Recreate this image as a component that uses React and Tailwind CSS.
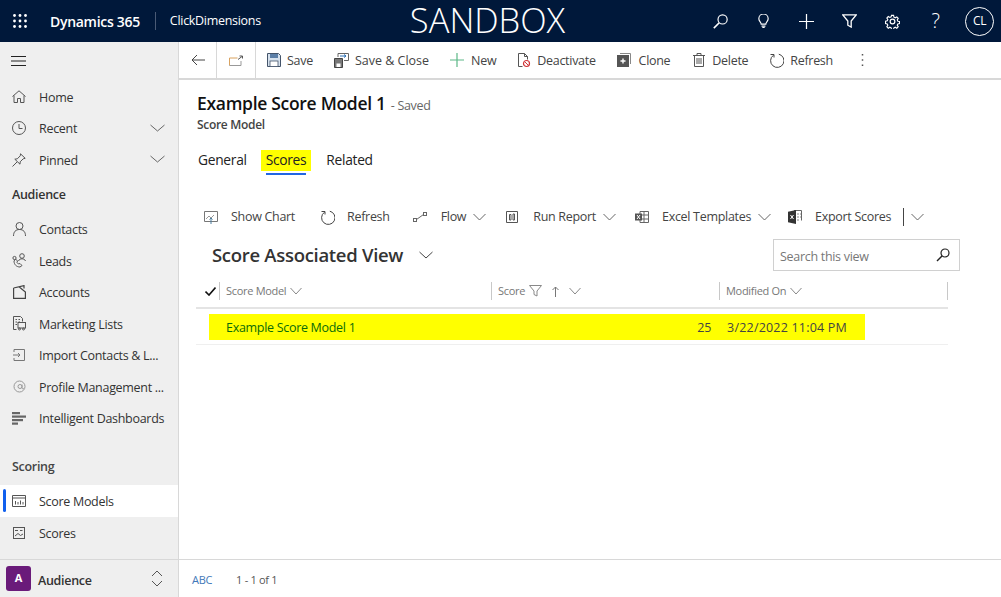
import React from "react";

const I = ({ w = 16, h = 16, vb, c = "#444", sw = 1, children, className = "" }) => (
  <svg width={w} height={h} viewBox={vb || `0 0 ${w} ${h}`} fill="none" stroke={c} strokeWidth={sw} className={`shrink-0 ${className}`}>{children}</svg>
);
const Chev = ({ w = 13, c = "#666", className = "" }) => (
  <I w={w} h={8} c={c} className={className}><path d={`M.5 1 L${w / 2} 7 L${w - 0.5} 1`} /></I>
);

const Grid = () => (
  <svg width="14" height="14" viewBox="0 0 14 14" fill="#fff" className="shrink-0">
    {[1.5, 7, 12.5].flatMap((x) => [1.5, 7, 12.5].map((y) => <circle key={`${x}${y}`} cx={x} cy={y} r="1.4" />))}
  </svg>
);

const Top = {
  search: <I w={15} h={15} vb="0 0 18 18" c="#fff" sw={1.4}><circle cx="11.500" cy="6.500" r="5.500" /><path d="M7.500 10.500 L1 17" strokeWidth="1.900" /></I>,
  bulb: <I w={11} h={14} vb="0 0 14 18" c="#fff" sw={1.5}><path d="M4 13c0-2.500-3-3.500-3-7a6 6 0 0 1 12 0c0 3.500-3 4.500-3 7z" /><path d="M4.500 15.500h5M5.500 17.500h3" /></I>,
  plus: <I w={15} h={15} vb="0 0 16 16" c="#fff" sw={1.3}><path d="M8 0v16M0 8h16" /></I>,
  filter: <I w={15} h={14} vb="0 0 16 15" c="#fff" sw={1.4}><path d="M.8 1h14.400L9.800 7.500V14L6.200 12V7.500z" /></I>,
  gear: <I w={15} h={15} c="#fff" vb="0 0 16 16" sw={1.3}><circle cx="8" cy="8" r="2.500" /><path d="M6.800 1h2.400l.4 2 1.500.7 1.800-1 1.600 1.700-1.100 1.700.7 1.500 2 .4v2.300l-2 .4-.7 1.500 1.100 1.700-1.600 1.700-1.800-1.100-1.500.7-.4 2H6.800l-.4-2-1.500-.7-1.800 1.100-1.600-1.700 1.100-1.700-.7-1.500-2-.4V7.600l2-.4.7-1.500L1.500 4 3.100 2.300l1.800 1 1.500-.7z" transform="translate(.6 .6) scale(.93)" /></I>,
};

const Cmd = {
  back: <I w={14} h={12} c="#444"><path d="M14 6H1M6 1 1 6l5 5" /></I>,
  popout: <I w={14} h={11} c="#777"><path d="M.5 10.500V3h8" stroke="#d9a25f" /><path d="M.5 10.500h11.500V6" stroke="#999" /><path d="M9 4.500l4-3M10.500 1H13.500v2.500" stroke="#555" /></I>,
  save: (
    <svg width="14" height="14" viewBox="0 0 14 14" className="shrink-0"><path d="M.5.5h11l2 2v11H.5z" fill="#d7e2ee" stroke="#44546a" /><rect x="3" y="1" width="8" height="4" fill="#5c7fa8" /><rect x="3" y="8" width="8" height="5.500" fill="#fff" stroke="#44546a" strokeWidth=".8" /></svg>
  ),
  saveClose: (
    <svg width="15" height="15" viewBox="0 0 15 15" className="shrink-0"><path d="M.5 5.500h8v9h-8z" fill="#777" stroke="#444" /><rect x="2.500" y="10.500" width="4" height="3.500" fill="#fff" /><path d="M4 4V.5h10.500v7H10" fill="none" stroke="#666" /><path d="M6 3h6M10 1.500 12 3 10 4.500" fill="none" stroke="#2b6fb5" /></svg>
  ),
  plus: <I w={14} h={14} c="#5cb887" sw={1.2}><path d="M7 0v14M0 7h14" /></I>,
  deact: (
    <svg width="14" height="15" viewBox="0 0 14 15" className="shrink-0"><path d="M5.500 13.500h-4v-13h6l3 3v3M7.500.5v3h3" fill="none" stroke="#555" /><circle cx="9.500" cy="10.500" r="3" fill="#fff" stroke="#d13438" strokeWidth="1.200" /><path d="M7.500 8.500l4 4" stroke="#d13438" /></svg>
  ),
  clone: (
    <svg width="14" height="14" viewBox="0 0 14 14" className="shrink-0"><path d="M3 .5h10.500V11" fill="none" stroke="#888" /><rect x="0" y="2" width="12" height="12" fill="#555" /><path d="M6 5.500v5M3.500 8h5" stroke="#fff" strokeWidth="1.400" /></svg>
  ),
  del: <I w={12} h={14} c="#555"><path d="M0 2.500h12M4 2.500V.5h4v2M1.500 2.500v11h9v-11M4 5v6M6 5v6M8 5v6" /></I>,
  refresh: <I w={15} h={15} c="#444"><path d="M4.500 2.200A6.700 6.700 0 1 0 9.800 1.200" /><path d="M1.500 1.500h3.500v3" /></I>,
};

const Nav = {
  home: <I w={14} h={13} c="#555"><path d="M.5 6.500 7 .8l6.500 5.700M2 5.500v7h3.500v-4h3v4H12v-7" /></I>,
  clock: <I w={14} h={14} c="#555"><circle cx="7" cy="7" r="6.500" /><path d="M7 3v4.500h3.500" /></I>,
  pin: <I w={14} h={14} c="#555"><path d="M.5 13.500 5 9M8.500 .8l4.700 4.500-2 .5-3 3-.2 2.400-5.200-5 2.500-.4 3-3z" /></I>,
  person: <I w={13} h={14} c="#555"><circle cx="6.500" cy="4" r="3.500" /><path d="M.5 14c0-4 2-6.500 6-6.500s6 2.500 6 6.500" /></I>,
  leads: <I w={14} h={15} c="#555"><circle cx="10" cy="3" r="2.300" /><circle cx="2.500" cy="5" r="1.600" /><path d="M2 8c0 3.500 2.500 6 6 6l2-1.500-2-2-1.500.5-1.500-1.500.5-1.500-2-2z" /><path d="M6.500 8c.5-1.500 2-2.200 3.500-2.200s3 .7 3.500 2.200" /></I>,
  accounts: <I w={13} h={14} c="#444" sw={1.2}><path d="M.6 3 11 .6v3M.6 3v10.400h11.800V7L6 1.800" /></I>,
  lists: (
    <svg width="13" height="15" viewBox="0 0 13 15" fill="none" stroke="#555" className="shrink-0"><path d="M.5.500h7l2 2v3M.5.500v13h3" /><path d="M2.500 3.500h1.500M2.500 6h1.500M5.500 3.500H7M5.500 6H7M2.500 8.500H4" /><rect x="5" y="6.500" width="7.500" height="5.500" fill="#efefef" /><circle cx="6.500" cy="13" r="1" /><circle cx="10.500" cy="13" r="1" /></svg>
  ),
  importI: <I w={12} h={12} c="#777"><path d="M1 3V.5h10.500v11H1V9M0 6h6.500M5 4l2 2-2 2" /></I>,
  at: <I w={13} h={13} c="#999"><circle cx="6.500" cy="6.500" r="5.500" /><circle cx="7" cy="6.500" r="2" /><path d="M9 4.500v3.500c0 1 1.500 1 1.800 0" /></I>,
  dash: (
    <svg width="14" height="13" viewBox="0 0 14 13" fill="#666" className="shrink-0"><rect y="0" width="8" height="2.200" /><rect y="3.500" width="14" height="2.200" /><rect y="7" width="11" height="2.200" /><rect y="10.500" width="6" height="2.200" /></svg>
  ),
  scoreModels: <I w={14} h={12} c="#555"><path d="M.5.500h13v11H.5zM.5 3h13" /><path d="M3.500 9.500V6M6 9.500V7M8.500 9.500V5.500M11 9.500V7" /></I>,
  scores: <I w={12} h={12} c="#555"><rect x=".5" y=".5" width="11" height="11" /><path d="M2 3.500h3M7 3.500h2.500" /><path d="M2 9l3-2.500 2.500 2L10 7" /></I>,
};

const Sub = {
  chart: <I w={14} h={13} c="#777"><path d="M.5.500h13v10H.5z" /><path d="M2 8l3-3 2 2 3-3" stroke="#999" /><path d="M7 13V7M5.500 8.500 7 7l1.500 1.500" stroke="#4a7d9e" /></I>,
  flow: <I w={14} h={10} c="#666"><rect x=".5" y="6.500" width="3" height="3" /><rect x="10.500" y=".5" width="3" height="3" /><path d="M3.500 7.500 10.500 2.500" /></I>,
  report: <I w={12} h={13} c="#555"><path d="M.5.500h11v11H.5z" /><path d="M3.500 3.500v5.500h1.500V3.500zM7 3v6h1.500V3z" /></I>,
  excel: (
    <svg width="14" height="12" viewBox="0 0 14 12" className="shrink-0"><path d="M5 .5h8.500v11H5zM5 4h8.500M5 8h8.500M9 .5v11" fill="none" stroke="#666" /><rect x="0" y="2.500" width="7" height="7" fill="#555" /><path d="M2 4l3 4M5 4 2 8" stroke="#fff" /></svg>
  ),
  export: (
    <svg width="14" height="14" viewBox="0 0 14 14" className="shrink-0"><path d="M6 .5h7.500v10" fill="none" stroke="#666" /><path d="M9 4h4M9 7h4M9 10h2" stroke="#888" strokeDasharray="2 1" /><path d="M0 1.800 8 0v14L0 12.200z" fill="#333" /><path d="M2.500 5l3 4M5.500 5l-3 4" stroke="#fff" /></svg>
  ),
};

function CmdBtn({ icon, label, ml, gap, wide }) {
  return (
    <div className={`flex items-center ${ml} ${gap}`}>
      {icon}
      <span className={`pt-[2px] ${wide ? "tracking-normal" : ""}`}>{label}</span>
    </div>
  );
}

function NavRow({ icon, label, chev, active }) {
  return (
    <div className={`relative flex h-[31.5px] items-center ${active ? "bg-white" : ""}`}>
      {active && <div className="absolute left-[3px] top-[4px] h-[23px] w-[3px] rounded-sm bg-[#1160ee]" />}
      <div className="flex w-[39px] shrink-0 justify-center pr-[1px] pt-[1px]">{icon}</div>
      <span className="whitespace-nowrap pt-[4px] text-[#333]">{label}</span>
      {chev && <Chev w={15} c="#666" className="ml-auto mr-[13px]" />}
    </div>
  );
}

function SubBtn({ icon, label, iconW, chev, ml }) {
  return (
    <div className={`flex items-center ${ml}`}>
      <div className={`flex ${iconW} shrink-0`}>{icon}</div>
      <span>{label}</span>
      {chev && <Chev className="ml-[7px]" />}
    </div>
  );
}

export default function App() {
  return (
    <div className="flex h-[597px] w-[1001px] flex-col overflow-hidden bg-white font-['Open_Sans','Noto_Sans',sans-serif] text-[12px] tracking-[-0.025em] text-[#444]">
      {/* top bar */}
      <header className="flex h-[42px] shrink-0 items-center bg-[#00183a] text-white">
        <div className="ml-[13px]"><Grid /></div>
        <span className="ml-[23px] text-[14px] font-semibold">Dynamics 365</span>
        <div className="ml-[15px] h-[18px] w-px bg-[#4a5a75]" />
        <span className="ml-[14px] text-[12.500px]">ClickDimensions</span>
        <span className="ml-[149px] pb-[2px] text-[34.500px] font-light leading-[40px] tracking-normal">SANDBOX</span>
        <div className="ml-auto flex items-center">
          <div className="flex w-[43px] justify-center">{Top.search}</div>
          <div className="flex w-[43px] justify-center">{Top.bulb}</div>
          <div className="flex w-[43px] justify-center">{Top.plus}</div>
          <div className="flex w-[43px] justify-center">{Top.filter}</div>
          <div className="flex w-[43px] justify-center">{Top.gear}</div>
          <div className="flex w-[43px] justify-center text-[20px] font-light leading-none">?</div>
          <div className="ml-[8px] mr-[7px] flex h-[29px] w-[29px] items-center justify-center rounded-full border border-white text-[12px]">CL</div>
        </div>
      </header>

      <div className="flex min-h-0 flex-1">
        {/* sidebar */}
        <aside className="flex w-[179px] shrink-0 flex-col border-r border-[#d8d8d8] bg-[#efefef] text-[12.500px]">
          <div className="flex h-[38.250px] shrink-0 items-center pl-[11px]">
            <I w={15} h={10} c="#222"><path d="M0 .5h15M0 5h15M0 9.500h15" /></I>
          </div>
          <NavRow icon={Nav.home} label="Home" />
          <NavRow icon={Nav.clock} label="Recent" chev />
          <NavRow icon={Nav.pin} label="Pinned" chev />
          <div className="flex h-[38px] items-center pl-[12px] pt-[4px] font-semibold text-[#333]">Audience</div>
          <NavRow icon={Nav.person} label="Contacts" />
          <NavRow icon={Nav.leads} label="Leads" />
          <NavRow icon={Nav.accounts} label="Accounts" />
          <NavRow icon={Nav.lists} label="Marketing Lists" />
          <NavRow icon={Nav.importI} label="Import Contacts & L..." />
          <NavRow icon={Nav.at} label="Profile Management ..." />
          <NavRow icon={Nav.dash} label="Intelligent Dashboards" />
          <div className="flex h-[51.750px] items-end pb-[8px] pl-[12px] font-semibold text-[#444]">Scoring</div>
          <NavRow icon={Nav.scoreModels} label="Score Models" active />
          <NavRow icon={Nav.scores} label="Scores" />
          <div className="mt-auto flex h-[38px] items-center border-t border-[#d8d8d8] pl-[6px]">
            <div className="flex h-[25px] w-[25px] items-center justify-center rounded-[3px] bg-[#6a1b7a] text-[11px] font-bold text-white">A</div>
            <span className="ml-[7px] pt-[6px] font-semibold text-[#333]">Audience</span>
            <I w={12} h={17} c="#555" className="ml-auto mr-[15px]"><path d="M1 6l5-5 5 5M1 11l5 5 5-5" /></I>
          </div>
        </aside>

        {/* main */}
        <main className="flex min-w-0 flex-1 flex-col">
          <div className="flex h-[38px] shrink-0 items-center border-b-2 border-[#d8d8d8] text-[12.500px]">
            <div className="flex h-full w-[38px] items-center justify-center border-r border-[#d8d8d8]">{Cmd.back}</div>
            <div className="flex h-full w-[39px] items-center justify-center border-r border-[#d8d8d8]">{Cmd.popout}</div>
            <CmdBtn icon={Cmd.save} label="Save" ml="ml-[11px]" gap="gap-[6px]" />
            <CmdBtn icon={Cmd.saveClose} label="Save & Close" ml="ml-[21px]" gap="gap-[6px]" wide />
            <CmdBtn icon={Cmd.plus} label="New" ml="ml-[21px]" gap="gap-[7px]" />
            <CmdBtn icon={Cmd.deact} label="Deactivate" ml="ml-[21px]" gap="gap-[6px]" />
            <CmdBtn icon={Cmd.clone} label="Clone" ml="ml-[21px]" gap="gap-[8px]" />
            <CmdBtn icon={Cmd.del} label="Delete" ml="ml-[23px]" gap="gap-[7px]" />
            <CmdBtn icon={Cmd.refresh} label="Refresh" ml="ml-[21px]" gap="gap-[6px]" />
            <I w={3} h={14} c="#555" className="ml-[28px]"><path d="M1.500 1v1.500M1.500 6.300v1.500M1.500 11.500V13" strokeWidth="1.500" /></I>
          </div>

          <div className="flex-1">
            <div className="pl-[18px] pt-[10px]">
              <div className="flex items-baseline">
                <span className="text-[17.500px] font-semibold leading-[26px] text-[#111]">Example Score Model 1</span>
                <span className="ml-[5px] text-[12.500px] text-[#666]">- Saved</span>
              </div>
              <div className="mt-[2px] text-[12px] font-semibold leading-[14px] text-[#444]">Score Model</div>
            </div>

            <div className="mt-[18px] flex h-[26px] items-start pl-[19px] text-[13.800px] text-[#222]">
              <span className="leading-[19px]">General</span>
              <div className="ml-[14px] flex flex-col">
                <span className="bg-[#ffff00] px-[5px] pb-[2px] leading-[19px]">Scores</span>
                <div className="mx-[5px] mt-[2px] h-[2px] bg-[#2266e3]" />
              </div>
              <span className="ml-[15px] leading-[19px]">Related</span>
            </div>

            <div className="mt-[29px] flex h-[24px] items-center pl-[25px] text-[12.500px]">
              <SubBtn icon={Sub.chart} label="Show Chart" iconW="w-[27px]" />
              <SubBtn icon={Cmd.refresh} label="Refresh" iconW="w-[27px]" ml="ml-[25px]" />
              <SubBtn icon={Sub.flow} label="Flow" iconW="w-[28px]" chev ml="ml-[23px]" />
              <SubBtn icon={Sub.report} label="Run Report" iconW="w-[27px]" chev ml="ml-[20px]" />
              <SubBtn icon={Sub.excel} label="Excel Templates" iconW="w-[27px]" chev ml="ml-[19px]" />
              <SubBtn icon={Sub.export} label="Export Scores" iconW="w-[27px]" ml="ml-[17px]" />
              <div className="ml-[12px] h-[18px] w-px bg-[#444]" />
              <Chev className="ml-[7px]" />
            </div>

            <div className="mt-[10px] flex h-[32px] items-center pl-[33px]">
              <span className="text-[18.500px] font-semibold text-[#333]">Score Associated View</span>
              <Chev w={14} c="#444" className="ml-[16px]" />
              <div className="ml-auto mr-[41px] flex h-[32px] w-[187px] items-center justify-between border border-[#d0d0d0] pl-[6px] pr-[9px] text-[12.500px] text-[#777]">
                <span className="pt-[5px]">Search this view</span>
                <I w={14} h={14} c="#222" sw={1.2}><circle cx="9" cy="5" r="4" /><path d="M6 8 1 13" strokeWidth="1.500" /></I>
              </div>
            </div>

            {/* grid */}
            <div className="ml-[17px] mt-[11px] w-[752px] border-b-2 border-[#e4e4e4] pb-[7px] text-[11px] text-[#777]">
              <div className="flex h-[18px] items-center">
                <div className="flex w-[23px] items-center pl-[9px]">
                  <I w={11} h={9} c="#111" sw={1.6}><path d="M.5 4.500 4 8l6.500-7.500" /></I>
                </div>
                <div className="flex h-full w-[272px] items-center gap-[4px] border-l border-[#c8c8c8] pl-[6px]">Score Model<Chev w={12} c="#888" /></div>
                <div className="flex h-full w-[228px] items-center border-l border-[#c8c8c8] pl-[6px]">
                  Score
                  <I w={13} h={12} c="#888" className="ml-[4px]"><path d="M.5.500h12L8 6v5L5 9.500V6z" /></I>
                  <I w={7} h={11} c="#777" className="ml-[10px]"><path d="M3.500 11V1M.5 4l3-3 3 3" /></I>
                  <Chev w={12} c="#888" className="ml-[10px]" />
                </div>
                <div className="flex h-full flex-1 items-center gap-[4px] border-l border-[#c8c8c8] pl-[6px]">Modified On<Chev w={12} c="#888" /></div>
                <div className="h-full w-px bg-[#c8c8c8]" />
              </div>
            </div>
            <div className="ml-[17px] w-[752px] border-b border-[#efefef] pb-[4px] pt-[5px]">
              <div className="ml-[13px] flex h-[26px] w-[656px] items-center bg-[#ffff00] text-[12.500px]">
                <span className="ml-[17px] pt-[2px] text-[#0a6b0a]">Example Score Model 1</span>
                <span className="ml-auto pt-[2px] text-[#444]">25</span>
                <span className="ml-[16px] mr-[18px] pt-[2px] tracking-[0.2px] text-[#444]">3/22/2022 11:04 PM</span>
              </div>
            </div>
          </div>

          <div className="flex h-[38px] shrink-0 items-center border-t border-[#d8d8d8] pl-[13px] pt-[4px] text-[11px]">
            <span className="text-[#3f78b8]">ABC</span>
            <span className="ml-[24px] text-[#555]">1 - 1 of 1</span>
          </div>
        </main>
      </div>
    </div>
  );
}
